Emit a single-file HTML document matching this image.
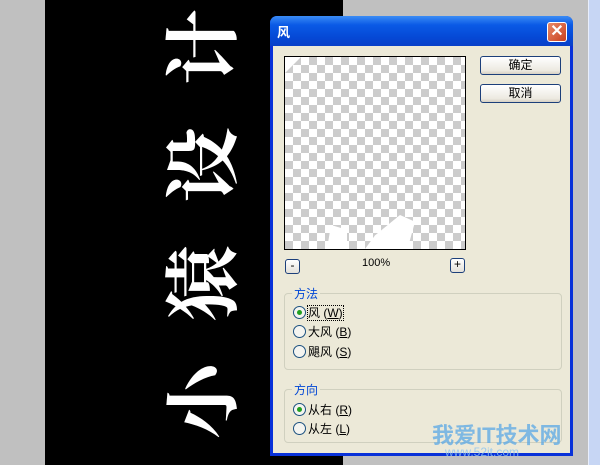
<!DOCTYPE html>
<html style="overflow:hidden;width:600px;height:465px"><head><meta charset="utf-8"><style>
*{margin:0;padding:0;box-sizing:border-box}
html,body{overflow:hidden}
body{width:600px;height:465px;background:#c0c0c0;position:relative;font-family:"Liberation Sans","Noto Sans CJK SC",sans-serif;font-size:12px}
.abs{position:absolute}
.cal{color:#fff;font-family:"Noto Serif CJK SC",serif;font-weight:700;font-size:76px;line-height:82px;transform:rotate(-90deg);transform-origin:center;white-space:nowrap;letter-spacing:42px}
.btn{position:absolute;left:480px;width:81px;height:19px;border:1px solid #1c3f7a;border-radius:3px;background:linear-gradient(#fff,#ece9e0 80%,#d6d0c4);text-align:center;font-size:12px;line-height:17px;color:#000}
.sb{position:absolute;width:15px;height:15px;border:1px solid #1c3f7a;border-radius:3px;background:linear-gradient(#fff,#e3e0d8);text-align:center;line-height:11px;font-size:12px}
fieldset{position:absolute;border:1px solid #d0d0bf;border-radius:4px}
.lg{position:absolute;background:#ece9d8;color:#0046d5;padding:0 2px;font-size:12px}
.r{position:absolute;left:293px;font-size:12px;line-height:14px}
.r i{display:inline-block;width:13px;height:13px;border:1px solid #1c5180;border-radius:50%;background:#f4f4f0;vertical-align:-2px;margin-right:2px;position:relative}
.r i.on:after{content:"";position:absolute;left:3px;top:3px;width:5px;height:5px;border-radius:50%;background:#21a121}
</style></head><body>
<div class="abs" style="left:45px;top:0;width:298px;height:465px;background:#000"></div>
<div class="abs" style="left:588px;top:0;width:12px;height:465px;background:#c7d6f4;border-left:1px solid #e8eefc"></div>
<div class="abs" style="left:0;top:0;width:343px;height:465px;overflow:hidden">
<div class="abs cal" style="left:-42px;top:200px;width:480px;height:82px;text-align:center;padding-left:42px">小猿设计</div>
</div>

<div class="abs" style="left:270px;top:16px;width:303px;height:440px;background:#0831d9;border-radius:7px 7px 0 0"></div>
<div class="abs" style="left:270px;top:16px;width:303px;height:30px;background:linear-gradient(#3b8cf5,#0a5ae6 30%,#0549d6 70%,#0840c8);border-radius:7px 7px 0 0"></div>
<div class="abs" style="left:277px;top:22px;color:#fff;font-weight:bold;font-size:13px">风</div>
<div class="abs" style="left:547px;top:22px;width:20px;height:20px;border:1px solid #fff;border-radius:3px;background:linear-gradient(135deg,#e88a6a,#c8401e);color:#fff;text-align:center;font-size:16px;line-height:17px;font-weight:bold">✕</div>
<div class="abs" style="left:273px;top:46px;width:297px;height:407px;background:#ece9d8"></div>

<div class="abs" style="left:284px;top:56px;width:182px;height:194px;border:1px solid #000;background-color:#fff;background-image:linear-gradient(45deg,#ccc 25%,transparent 25%,transparent 75%,#ccc 75%),linear-gradient(45deg,#ccc 25%,transparent 25%,transparent 75%,#ccc 75%);background-size:16px 16px;background-position:0 0,8px 8px"></div>
<div class="abs" style="left:285px;top:57px;width:16px;height:16px;background:#fff;clip-path:polygon(0 0,100% 0,0 100%)"></div>
<div class="abs" style="left:327px;top:225px;width:20px;height:24px;background:#fff;clip-path:polygon(20% 0,100% 20%,100% 100%,0 100%)"></div>
<div class="abs" style="left:365px;top:215px;width:50px;height:34px;background:#fff;clip-path:polygon(70% 0,100% 20%,85% 100%,0 100%,20% 60%)"></div>

<div class="btn" style="top:56px">确定</div>
<div class="btn" style="top:84px">取消</div>
<div class="sb" style="left:285px;top:259px">-</div>
<div class="sb" style="left:450px;top:258px">+</div>
<div class="abs" style="left:362px;top:257px;font-size:11px">100%</div>

<fieldset style="left:284px;top:293px;width:278px;height:77px"></fieldset>
<div class="lg" style="left:292px;top:285px">方法</div>
<div class="r" style="top:306px"><i class="on"></i><span style="outline:1px dotted #000">风 (<u>W</u>)</span></div>
<div class="r" style="top:325px"><i></i>大风 (<u>B</u>)</div>
<div class="r" style="top:345px"><i></i>飓风 (<u>S</u>)</div>

<fieldset style="left:284px;top:389px;width:278px;height:54px"></fieldset>
<div class="lg" style="left:292px;top:381px">方向</div>
<div class="r" style="top:403px"><i class="on"></i>从右 (<u>R</u>)</div>
<div class="r" style="top:422px"><i></i>从左 (<u>L</u>)</div>

<div class="abs" style="left:432px;top:418px;color:#5aa8e6;font-weight:bold;font-size:22px;opacity:.75">我爱IT技术网</div>
<div class="abs" style="left:445px;top:445px;color:#8cc4f0;font-size:12px;opacity:.8">www.52it.com</div>
</body></html>
